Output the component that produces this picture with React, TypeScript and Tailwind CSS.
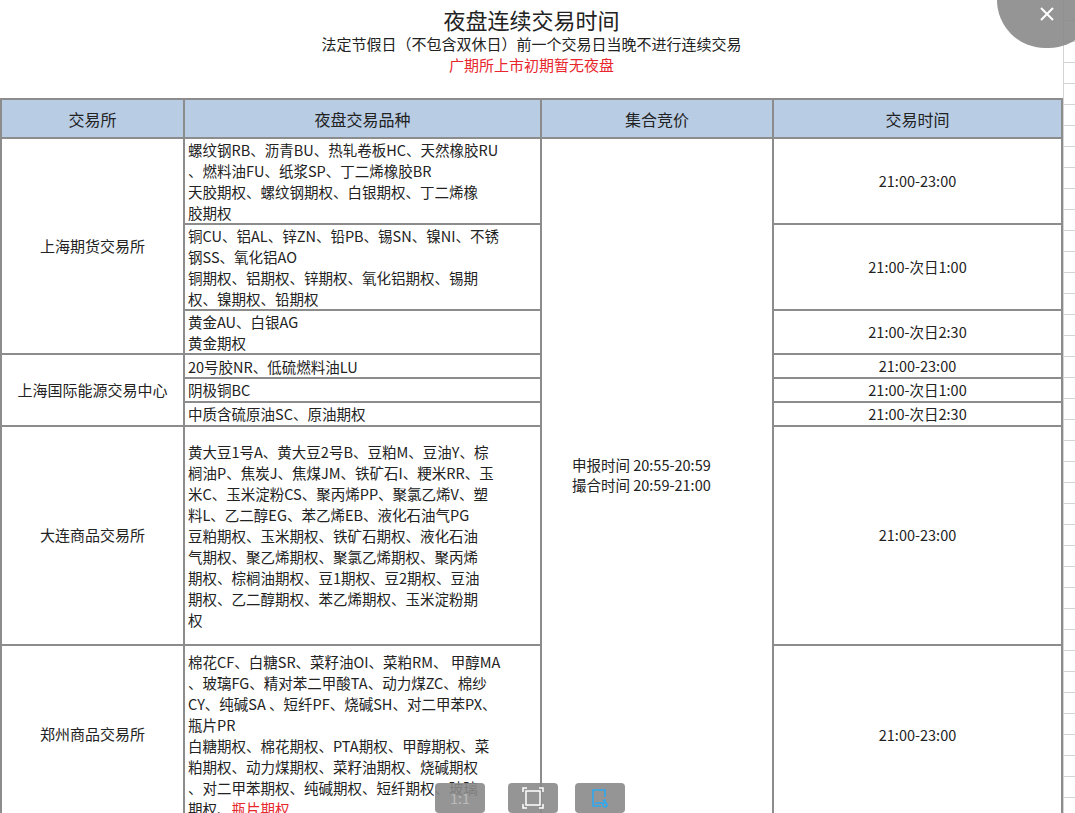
const F = { fontFamily: '"Noto Sans CJK SC", "Liberation Sans", sans-serif' }

type Row = { lines: React.ReactNode[]; time: string; h: number }

const groups: { name: string; rows: Row[] }[] = [
  {
    name: '上海期货交易所',
    rows: [
      { lines: ['螺纹钢RB、沥青BU、热轧卷板HC、天然橡胶RU', '、燃料油FU、纸浆SP、丁二烯橡胶BR', '天胶期权、螺纹钢期权、白银期权、丁二烯橡', '胶期权'], time: '21:00-23:00', h: 83 },
      { lines: ['铜CU、铝AL、锌ZN、铅PB、锡SN、镍NI、不锈', '钢SS、氧化铝AO', '铜期权、铝期权、锌期权、氧化铝期权、锡期', '权、镍期权、铅期权'], time: '21:00-次日1:00', h: 83 },
      { lines: ['黄金AU、白银AG', '黄金期权'], time: '21:00-次日2:30', h: 42 },
    ],
  },
  {
    name: '上海国际能源交易中心',
    rows: [
      { lines: ['20号胶NR、低硫燃料油LU'], time: '21:00-23:00', h: 24 },
      { lines: ['阴极铜BC'], time: '21:00-次日1:00', h: 23 },
      { lines: ['中质含硫原油SC、原油期权'], time: '21:00-次日2:30', h: 23 },
    ],
  },
  {
    name: '大连商品交易所',
    rows: [
      { lines: ['黄大豆1号A、黄大豆2号B、豆粕M、豆油Y、棕', '榈油P、焦炭J、焦煤JM、铁矿石I、粳米RR、玉', '米C、玉米淀粉CS、聚丙烯PP、聚氯乙烯V、塑', '料L、乙二醇EG、苯乙烯EB、液化石油气PG', '豆粕期权、玉米期权、铁矿石期权、液化石油', '气期权、聚乙烯期权、聚氯乙烯期权、聚丙烯', '期权、棕榈油期权、豆1期权、豆2期权、豆油', '期权、乙二醇期权、苯乙烯期权、玉米淀粉期', '权'], time: '21:00-23:00', h: 219 },
    ],
  },
  {
    name: '郑州商品交易所',
    rows: [
      { lines: ['棉花CF、白糖SR、菜籽油OI、菜粕RM、 甲醇MA', '、玻璃FG、精对苯二甲酸TA、动力煤ZC、棉纱', 'CY、纯碱SA 、短纤PF、烧碱SH、对二甲苯PX、', '瓶片PR', '白糖期权、棉花期权、PTA期权、甲醇期权、菜', '粕期权、动力煤期权、菜籽油期权、烧碱期权', '、对二甲苯期权、纯碱期权、短纤期权、玻璃', <>期权、<span className="text-[#e8262d]">瓶片期权</span></>], time: '21:00-23:00', h: 180 },
    ],
  },
]

const B = 'border-2 border-[#8c8c8c]'

export default function App() {
  return (
    <div className="relative w-[1075px] h-[813px] overflow-hidden bg-white text-[#222]" style={F}>
      <div className="absolute right-0 top-0 bottom-0 w-[12px] bg-[repeating-linear-gradient(to_bottom,#fff_0px,#fff_20px,#d4d4d4_20px,#d4d4d4_21px)] border-l border-[#d4d4d4]" />
      <div className="w-[1063px]">
        <div className="flex flex-col items-center pt-[4px] h-[98px]">
          <div className="text-[22px] leading-[30px]">夜盘连续交易时间</div>
          <div className="text-[15px] leading-[20px]">法定节假日（不包含双休日）前一个交易日当晚不进行连续交易</div>
          <div className="text-[15px] leading-[22px] text-[#e8262d]">广期所上市初期暂无夜盘</div>
        </div>
        <table className="w-full border-collapse text-[14.5px] table-fixed">
          <colgroup>
            <col className="w-[183px]" />
            <col className="w-[357px]" />
            <col className="w-[232px]" />
            <col />
          </colgroup>
          <thead>
            <tr className="h-[39px] bg-[#b8cce4] text-[16px]">
              <th className={`${B} font-normal`}>交易所</th>
              <th className={`${B} font-normal`}>夜盘交易品种</th>
              <th className={`${B} font-normal`}>集合竞价</th>
              <th className={`${B} font-normal`}>交易时间</th>
            </tr>
          </thead>
          <tbody>
            {groups.map((g, gi) =>
              g.rows.map((r, ri) => (
                <tr key={`${gi}-${ri}`} style={{ height: r.h }}>
                  {ri === 0 && (
                    <td rowSpan={g.rows.length} className={`${B} text-center text-[15px]`}>{g.name}</td>
                  )}
                  <td className={`${B} px-[3px] align-middle leading-[21px] whitespace-nowrap`}>
                    {r.lines.map((l, i) => <div key={i}>{l}</div>)}
                  </td>
                  {gi === 0 && ri === 0 && (
                    <td rowSpan={8} className={`${B} align-middle`}>
                      <div className="pl-[30px] leading-[20px] mb-[12px]">
                        <div>申报时间 20:55-20:59</div>
                        <div>撮合时间 20:59-21:00</div>
                      </div>
                    </td>
                  )}
                  <td className={`${B} text-center`}>{r.time}</td>
                </tr>
              ))
            )}
          </tbody>
        </table>
      </div>
      <div className="absolute right-[-22px] top-[-48px] w-[100px] h-[96px] rounded-full bg-[#8a8a8a] opacity-90" />
      <div className="absolute right-[20px] top-[6px] text-white">
        <svg width="16" height="16" viewBox="0 0 16 16" stroke="currentColor" strokeWidth="2"><path d="M2 2l12 12M14 2L2 14" /></svg>
      </div>
      <div className="absolute left-[435px] top-[783px] w-[50px] h-[30px] rounded bg-[#8a8a8a]/90 flex items-center justify-center text-[#bbb] text-[14px]">1:1</div>
      <div className="absolute left-[508px] top-[783px] w-[50px] h-[30px] rounded bg-[#8a8a8a]/90 flex items-center justify-center">
        <svg width="22" height="22" viewBox="0 0 22 22" fill="none" stroke="white" strokeWidth="1.5"><rect x="4" y="4" width="14" height="14" /><path d="M1 5V1h4M17 1h4v4M21 17v4h-4M5 21H1v-4" /></svg>
      </div>
      <div className="absolute left-[575px] top-[783px] w-[50px] h-[30px] rounded bg-[#8a8a8a]/90 flex items-center justify-center">
        <svg width="22" height="22" viewBox="0 0 22 22" fill="none" stroke="#2fa8f0" strokeWidth="1.6"><path d="M16 10V3H4v16h8" /><path d="M6 16h8" /><circle cx="16" cy="18" r="2" /><path d="M16 12v4M14 13l4 4" /></svg>
      </div>
    </div>
  )
}
